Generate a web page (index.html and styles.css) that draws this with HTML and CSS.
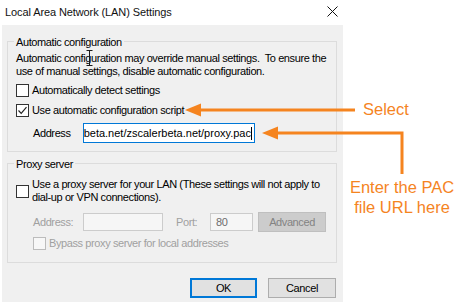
FILE: index.html
```html
<!DOCTYPE html>
<html>
<head>
<meta charset="utf-8">
<link rel="stylesheet" href="styles.css">
</head>
<body>
<div class="screen">
  <div class="dialog">
    <div class="titlebar">
      <span class="title">Local Area Network (LAN) Settings</span>
      <svg class="close" width="11" height="11" viewBox="0 0 11 11"><path d="M0.5 0.5 L10.5 10.5 M10.5 0.5 L0.5 10.5" stroke="#111" stroke-width="1"/></svg>
    </div>
    <div class="body">
      <div class="group g1">
        <div class="legend">Automatic configuration</div>
        <p class="desc">Automatic configuration may override manual settings.&nbsp; To ensure the<br>use of manual settings, disable automatic configuration.</p>
        <div class="check r1"><span class="box"></span><span>Automatically detect settings</span></div>
        <div class="check r2"><span class="box"><svg width="11" height="11" viewBox="0 0 11 11"><path d="M1.5 5.5 L4.2 8.3 L9.5 2.2" fill="none" stroke="#222" stroke-width="1.2"/></svg></span><span>Use automatic configuration script</span></div>
        <div class="addr-row">
          <span class="addr-label">Address</span>
          <div class="input focus"><span class="val">rbeta.net/zscalerbeta.net/proxy.pac</span><span class="caret"></span></div>
        </div>
      </div>
      <div class="group g2">
        <div class="legend">Proxy server</div>
        <div class="check proxy"><span class="box"></span><span>Use a proxy server for your LAN (These settings will not apply to<br>dial-up or VPN connections).</span></div>
        <div class="proxy-row">
          <span class="addr-label dis">Address:</span>
          <div class="input disabled addr"></div>
          <span class="port-label dis">Port:</span>
          <div class="input disabled port">80</div>
          <div class="adv">Advanced</div>
        </div>
        <div class="check bypass dis"><span class="box dis-box"></span><span>Bypass proxy server for local addresses</span></div>
      </div>
      <div class="buttons">
        <div class="btn ok">OK</div>
        <div class="btn">Cancel</div>
      </div>
    </div>
  </div>
  <svg class="ibeam" width="7" height="16" viewBox="0 0 7 16"><path d="M0.5 0.5 H6.5 M3.5 0.5 V15.5 M0.5 15.5 H6.5" fill="none" stroke="#1a1a1a" stroke-width="1"/></svg>
  <svg class="annot" width="474" height="306" viewBox="0 0 474 306">
    <line x1="197" y1="110" x2="355" y2="110" stroke="#f5841f" stroke-width="3"/>
    <polygon points="185,110 201,103.5 201,116.5" fill="#f5841f"/>
    <polyline points="274,133 402,133 402,174" fill="none" stroke="#f5841f" stroke-width="3"/>
    <polygon points="262,133 278,126.5 278,139.5" fill="#f5841f"/>
  </svg>
  <div class="callout select">Select</div>
  <div class="callout enter">Enter the PAC<br>file URL here</div>
</div>
</body>
</html>
```
FILE: styles.css
```css
html, body {
  margin: 0;
  padding: 0;
  background: #fff;
}
.screen {
  position: relative;
  width: 474px;
  height: 306px;
  overflow: hidden;
  background: #fff;
  font-family: "Liberation Sans", Arial, sans-serif;
  font-size: 11px;
  letter-spacing: -0.4px;
  color: #000;
}
.dialog {
  width: 341px;
  margin-left: 2px;
  height: 302px;
  display: flex;
  flex-direction: column;
}
.titlebar {
  height: 25px;
  flex: none;
  display: flex;
  align-items: center;
  justify-content: space-between;
  padding: 0 5px 2px 3px;
  box-sizing: border-box;
  background: #fff;
}
.title {
  font-size: 11px;
  letter-spacing: -0.1px;
  color: #111;
}
.close {
  display: block;
}
.body {
  flex: 1;
  background: #f0f0f0;
  padding: 16px 6px 4px 5px;
  box-sizing: border-box;
  display: flex;
  flex-direction: column;
}
.group {
  width: 330px;
  flex: none;
  box-sizing: border-box;
  border: 1px solid #dcdcdc;
  padding: 0 8px;
}
.g1 { height: 111px; }
.g2 {
  height: 100px;
  margin-top: 11px;
}
.legend {
  width: max-content;
  margin-top: -7px;
  margin-left: -2px;
  padding: 0 2px;
  line-height: 14px;
  height: 14px;
  background: #f0f0f0;
}
.desc {
  margin: 3px 0 0 0;
  line-height: 13px;
  white-space: nowrap;
}
.check {
  display: flex;
  align-items: center;
  line-height: 13px;
  white-space: nowrap;
}
.box {
  width: 13px;
  height: 13px;
  box-sizing: border-box;
  border: 1px solid #333;
  background: #fff;
  margin-right: 3px;
  flex: none;
  display: flex;
  align-items: center;
  justify-content: center;
}
.box svg {
  display: block;
}
.r1 { margin-top: 6px; }
.r2 { margin-top: 7px; }
.addr-row {
  display: flex;
  align-items: center;
  margin-top: 6px;
  height: 20px;
}
.addr-label {
  width: 67px;
  padding-left: 17px;
  box-sizing: border-box;
  flex: none;
}
.input {
  height: 20px;
  box-sizing: border-box;
  background: #fff;
  display: flex;
  align-items: center;
  overflow: hidden;
  white-space: nowrap;
}
.focus {
  width: 172px;
  border: 1px solid #0078d7;
  justify-content: flex-end;
  padding-right: 2px;
}
.caret {
  width: 1px;
  height: 13px;
  background: #000;
  flex: none;
}
.val {
  flex: none;
  letter-spacing: 0;
}
.proxy { margin-top: 7px; }
.proxy-row {
  display: flex;
  align-items: center;
  margin-top: 8px;
  height: 20px;
}
.dis { color: #a0a0a0; }
.disabled {
  height: 18px;
  border: 1px solid #cccccc;
  background: #f6f6f6;
}
.addr { width: 80px; }
.port-label {
  width: 34px;
  margin-left: 13px;
  flex: none;
}
.port {
  width: 43px;
  padding-left: 5px;
  color: #6d6d6d;
}
.adv {
  width: 68px;
  height: 20px;
  margin-left: 5px;
  box-sizing: border-box;
  background: #cccccc;
  border: 1px solid #bfbfbf;
  color: #838383;
  display: flex;
  align-items: center;
  justify-content: center;
}
.bypass {
  margin-top: 5px;
  padding-left: 17px;
}
.dis-box {
  border-color: #bcbcbc;
  background: #f7f7f7;
}
.buttons {
  display: flex;
  justify-content: flex-end;
  gap: 11px;
  margin-top: auto;
  padding-right: 1px;
}
.btn {
  width: 68px;
  height: 20px;
  box-sizing: border-box;
  background: #e1e1e1;
  border: 1px solid #adadad;
  display: flex;
  align-items: center;
  justify-content: center;
}
.ok {
  width: 67px;
  border: 2px solid #0078d7;
}
.ibeam {
  position: absolute;
  left: 86px;
  top: 50px;
  pointer-events: none;
}
.annot {
  position: absolute;
  left: 0;
  top: 0;
  pointer-events: none;
}
.callout {
  position: absolute;
  color: #f5841f;
  font-family: "Liberation Sans", Arial, sans-serif;
  font-size: 16.5px;
  letter-spacing: 0;
  line-height: 20px;
  text-align: center;
}
.select {
  left: 363px;
  top: 99px;
}
.enter {
  left: 342px;
  top: 177px;
  width: 120px;
}
```
